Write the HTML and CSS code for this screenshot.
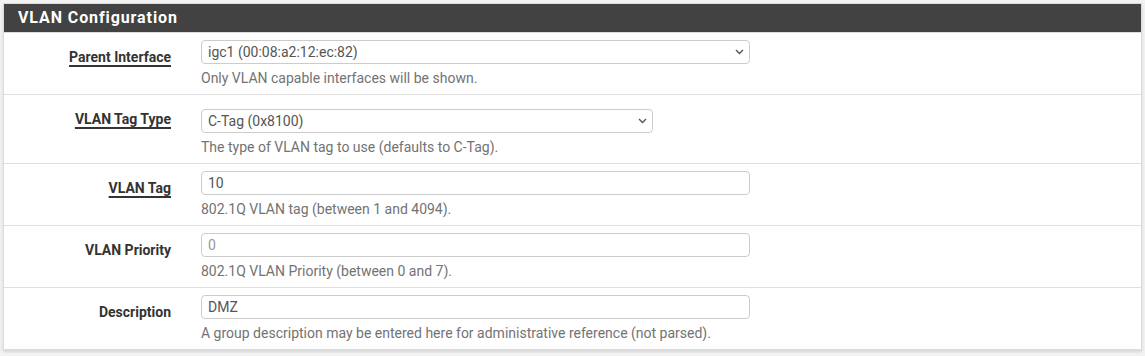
FILE: index.html
```html
<!DOCTYPE html>
<html lang="en">
<head>
    <meta charset="UTF-8">
    <meta name="viewport" content="width=device-width, initial-scale=1.0">
    <title>VLAN Configuration</title>
    <link rel="stylesheet" href="styles.css">
</head>
<body>
    <div class="panel">
        <h2 class="panel-title">VLAN Configuration</h2>

        <div class="form-row">
            <label class="form-label has-help" for="if">Parent Interface</label>
            <div class="form-field wide">
                <div class="select-wrap">
                    <select id="if" class="form-control">
                        <option>igc1 (00:08:a2:12:ec:82)</option>
                    </select>
                    <svg class="chevron" width="9" height="6" viewBox="0 0 9 6"><path d="M1 1l3.5 3.5L8 1" fill="none" stroke="#555" stroke-width="1.4"/></svg>
                </div>
                <div class="help">Only VLAN capable interfaces will be shown.</div>
            </div>
        </div>

        <div class="form-row">
            <label class="form-label has-help" for="tagtype">VLAN Tag Type</label>
            <div class="form-field narrow spaced">
                <div class="select-wrap">
                    <select id="tagtype" class="form-control">
                        <option>C-Tag (0x8100)</option>
                    </select>
                    <svg class="chevron" width="9" height="6" viewBox="0 0 9 6"><path d="M1 1l3.5 3.5L8 1" fill="none" stroke="#555" stroke-width="1.4"/></svg>
                </div>
                <div class="help">The type of VLAN tag to use (defaults to C-Tag).</div>
            </div>
        </div>

        <div class="form-row">
            <label class="form-label has-help" for="tag">VLAN Tag</label>
            <div class="form-field wide">
                <input id="tag" class="form-control" type="text" value="10">
                <div class="help">802.1Q VLAN tag (between 1 and 4094).</div>
            </div>
        </div>

        <div class="form-row">
            <label class="form-label" for="pcp">VLAN Priority</label>
            <div class="form-field wide">
                <input id="pcp" class="form-control" type="text" placeholder="0">
                <div class="help">802.1Q VLAN Priority (between 0 and 7).</div>
            </div>
        </div>

        <div class="form-row">
            <label class="form-label" for="descr">Description</label>
            <div class="form-field wide">
                <input id="descr" class="form-control" type="text" value="DMZ">
                <div class="help">A group description may be entered here for administrative reference (not parsed).</div>
            </div>
        </div>
    </div>
</body>
</html>
```

FILE: styles.css
```css
* {
    margin: 0;
    padding: 0;
    box-sizing: border-box;
}

body {
    font-family: Roboto, 'Liberation Sans', sans-serif;
    font-size: 14px;
    line-height: 20px;
    color: #333;
    background: #f2f2f2;
    padding: 3px;
}

.panel {
    background: #fff;
    border: 1px solid #dcdcdc;
    box-shadow: 0 2px 3px rgba(0, 0, 0, 0.12);
}

.panel-title {
    background: #424242;
    color: #fff;
    font-size: 16px;
    font-weight: 700;
    letter-spacing: 0.9px;
    line-height: 28px;
    padding: 0 14px;
    border-bottom: 1px solid #ddd;
}

.form-row {
    display: flex;
    gap: 30px;
    padding: 7px 0 6px;
    border-bottom: 1px solid #e0e0e0;
}

.form-row:last-child {
    border-bottom: none;
}

.form-label {
    width: 167px;
    flex-shrink: 0;
    text-align: right;
    font-weight: 700;
    padding-top: 7px;
    color: #333;
}

.has-help {
    text-decoration: underline;
    text-decoration-thickness: 2px;
    text-underline-offset: 3px;
}

.form-field.wide {
    width: 549px;
}

.form-field.narrow {
    width: 452px;
}

.form-field.spaced {
    padding-top: 7px;
}

.select-wrap {
    position: relative;
}

.chevron {
    position: absolute;
    right: 6px;
    top: 9px;
    pointer-events: none;
}

.form-control {
    display: block;
    width: 100%;
    height: 24px;
    padding: 0 6px;
    font-family: inherit;
    font-size: 14px;
    color: #555;
    background: #fff;
    border: 1px solid #ccc;
    border-radius: 4px;
    outline: none;
}

select.form-control {
    appearance: none;
    -webkit-appearance: none;
    padding-right: 20px;
}

.form-control::placeholder {
    color: #999;
}

.help {
    margin-top: 4px;
    color: #737373;
}
```
